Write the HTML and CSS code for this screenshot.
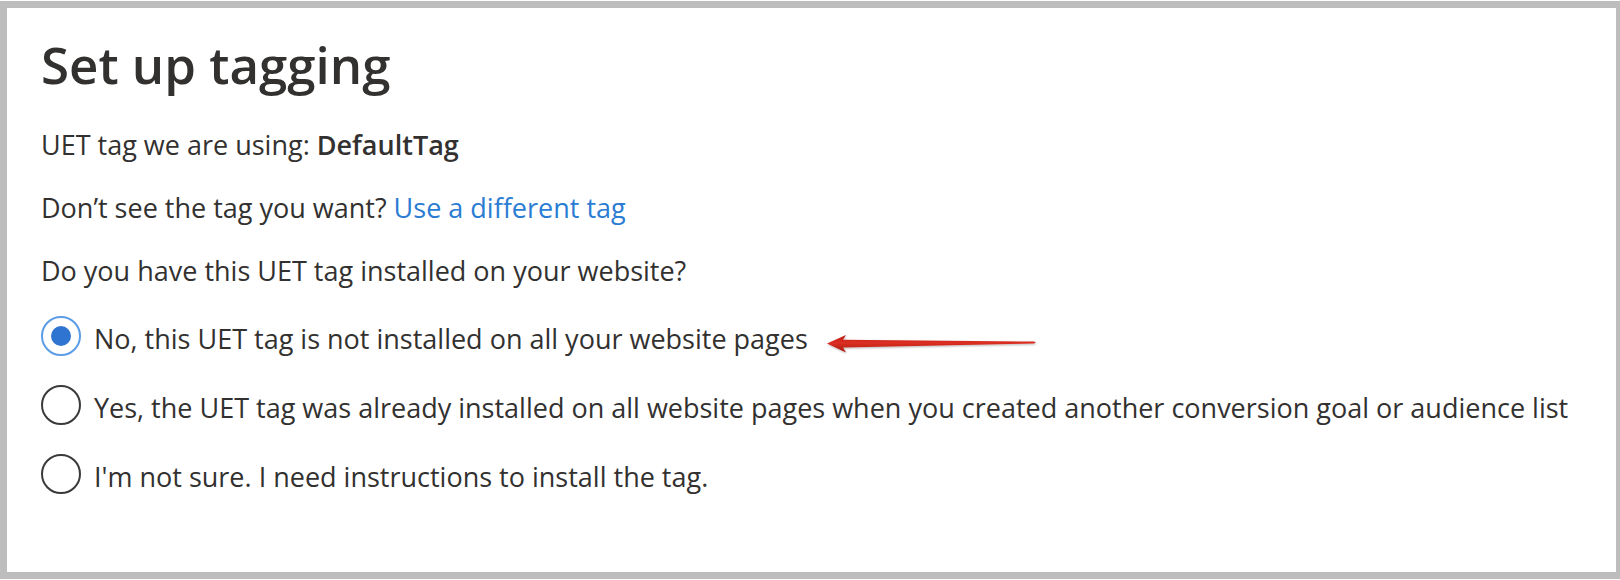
FILE: index.html
```html
<!DOCTYPE html>
<html lang="en">
<head>
<meta charset="utf-8">
<title>Set up tagging</title>
<link rel="stylesheet" href="styles.css">
</head>
<body>
<div class="frame">
  <div class="content">
    <h1 class="title">Set up tagging</h1>
    <p class="line">UET tag we are using: <strong>DefaultTag</strong></p>
    <p class="line">Don’t see the tag you want? <a class="link" href="#">Use a different tag</a></p>
    <p class="line">Do you have this UET tag installed on your website?</p>
    <div class="options">
      <label class="option">
        <span class="radio checked"><span class="dot"></span></span>
        <span class="opt-text">No, this UET tag is not installed on all your website pages</span>
      </label>
      <label class="option">
        <span class="radio"></span>
        <span class="opt-text">Yes, the UET tag was already installed on all website pages when you created another conversion goal or audience list</span>
      </label>
      <label class="option">
        <span class="radio"></span>
        <span class="opt-text">I'm not sure. I need instructions to install the tag.</span>
      </label>
    </div>
  </div>
  <svg class="arrow" width="216" height="32" viewBox="0 0 216 32" xmlns="http://www.w3.org/2000/svg">
    <defs>
      <linearGradient id="ag" x1="0" y1="0" x2="0" y2="1">
        <stop offset="0" stop-color="#b81d14"/>
        <stop offset="0.45" stop-color="#dc2f22"/>
        <stop offset="1" stop-color="#a8180f"/>
      </linearGradient>
      <filter id="sh" x="-5%" y="-40%" width="110%" height="180%">
        <feDropShadow dx="0.5" dy="1" stdDeviation="0.8" flood-color="#000" flood-opacity="0.3"/>
      </filter>
    </defs>
    <path d="M3 15.5 L22 7 L19 11.8 L210 13.6 Q213 14.4 210 15.4 L19 19.4 L22 24.5 Z" fill="url(#ag)" filter="url(#sh)"/>
  </svg>
</div>
</body>
</html>
```
FILE: styles.css
```css
html, body {
  margin: 0;
  padding: 0;
  background: #ffffff;
  overflow: hidden;
}

body {
  font-family: "Open Sans", "Noto Sans", "Liberation Sans", sans-serif;
  color: #323130;
}

.frame {
  position: relative;
  margin-top: 1px;
  height: 564px;
  width: 1609px;
  border-style: solid;
  border-color: #bdbdbd;
  border-width: 7px 4px 7px 7px;
  background: #ffffff;
}

.content {
  padding: 26px 0 0 34px;
}

.title {
  margin: 0;
  font-size: 51px;
  line-height: 60px;
  font-weight: 600;
  color: #323130;
}

.line {
  margin: 33px 0 0 0;
  font-size: 27px;
  line-height: 36px;
}

.line + .line {
  margin-top: 27px;
}

.line strong {
  font-weight: 600;
}

.link {
  color: #2b7cd3;
  text-decoration: none;
}

.options {
  display: flex;
  flex-direction: column;
  gap: 29px;
  margin-top: 27px;
}

.option {
  display: flex;
  align-items: flex-start;
  gap: 13px;
  height: 40px;
  cursor: pointer;
}

.radio {
  box-sizing: border-box;
  width: 40px;
  height: 40px;
  flex: 0 0 40px;
  border: 2px solid #3b3a39;
  border-radius: 50%;
  display: flex;
  align-items: center;
  justify-content: center;
}

.radio.checked {
  border-color: #5b9de6;
}

.dot {
  width: 20px;
  height: 20px;
  border-radius: 50%;
  background: #2f74d0;
}

.opt-text {
  font-size: 27px;
  line-height: 36px;
  margin-top: 5px;
  white-space: nowrap;
}

.arrow {
  position: absolute;
  left: 817px;
  top: 320px;
}
```
